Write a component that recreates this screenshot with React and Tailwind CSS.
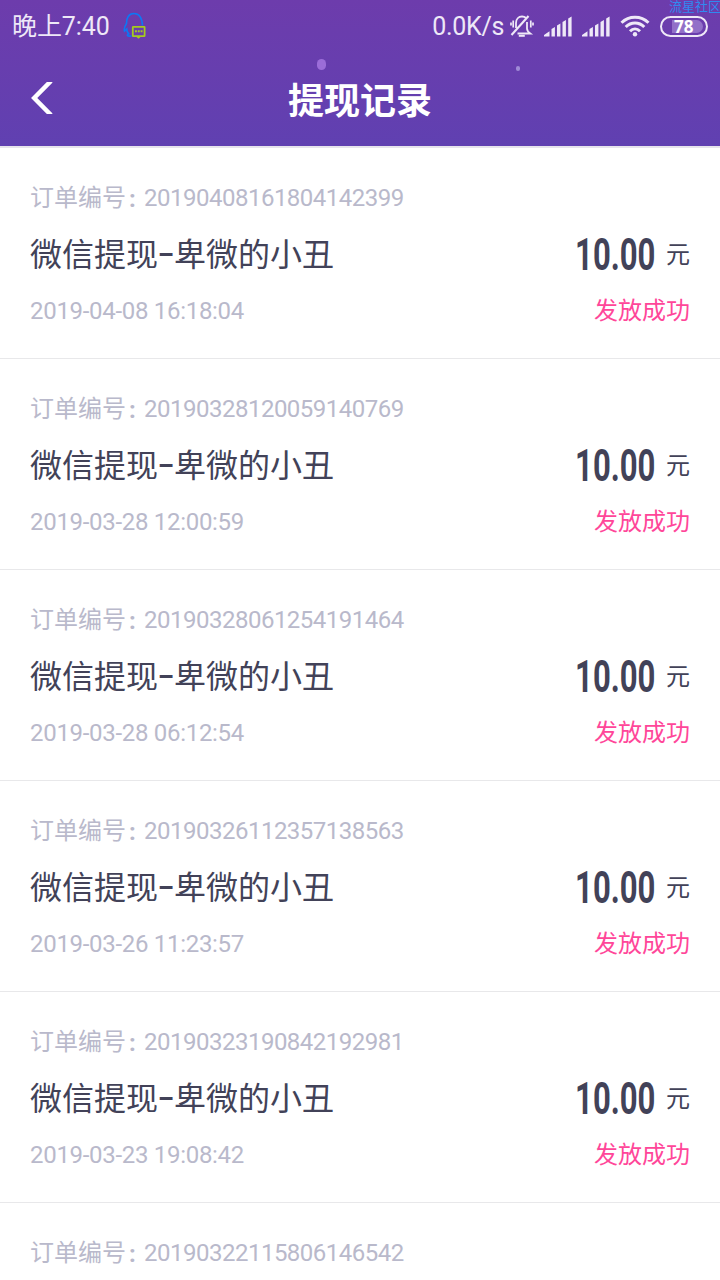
import React from "react";

const records = [
  { id: "20190408161804142399", time: "2019-04-08 16:18:04" },
  { id: "20190328120059140769", time: "2019-03-28 12:00:59" },
  { id: "20190328061254191464", time: "2019-03-28 06:12:54" },
  { id: "20190326112357138563", time: "2019-03-26 11:23:57" },
  { id: "20190323190842192981", time: "2019-03-23 19:08:42" },
];

const nextRecordId = "20190322115806146542";

function QQIcon() {
  return (
    <svg className="ml-[13px] w-6 h-7" viewBox="0 0 24 28" fill="none">
      <path
        d="M19.5 13.5C19 6 16.5 1.5 11 1.5S3.5 6 3.5 11.5C1.5 14.5 0.8 17 1.5 19l2.2-2c0 2 0.8 3.5 2 4.8-2 1-2.2 2.7 2.8 2.2"
        stroke="#0c78f5"
        strokeWidth="1.6"
      />
      <rect x="9.8" y="14.8" width="11.8" height="9.4" rx="0.5" stroke="#a5cc1e" strokeWidth="1.8" />
      <path d="M13.5 25h4l-2 1.7z" fill="#a5cc1e" />
      <path d="M12 19.3h1.9M14.8 19.3h1.9M17.6 19.3h1.9" stroke="#a5cc1e" strokeWidth="1.9" />
    </svg>
  );
}

function MuteIcon() {
  return (
    <svg className="w-6 h-6 ml-1.5" viewBox="0 0 24 24" fill="none" stroke="#eee8f7" strokeWidth="1.8">
      <path d="M6 14V9C6 5 8.5 2.5 12 2.5c1.7 0 3 0.5 4 1.5M17 8v6.5c0 2.2 1.2 3.500 3.300 5H7.500" />
      <path d="M1.5 21L18.5 2" strokeWidth="2.1" />
      <path d="M8.8 21.8h6" strokeWidth="2" />
      <path d="M3.200 6.500v7M1 8.500v3M20.800 6.500v7M23 8.500v3" strokeWidth="1.7" />
    </svg>
  );
}

function Signal({ className }) {
  return (
    <svg className={className} viewBox="0 0 28 21" fill="#eee8f7">
      <path d="M0 20.5v-1.5l5.5-3.8v5.3zM7.5 13l3.4-2v9.5h-3.4zM13 9.5l3.4-2v13h-3.4zM18.5 6l3.4-2v16.5h-3.4zM24.2 2.5l3.4-2v20h-3.4z" />
    </svg>
  );
}

function WifiIcon() {
  return (
    <svg className="w-[30px] h-[22px] ml-2.5" viewBox="0 0 30 22" fill="none" stroke="#eee8f7" strokeWidth="3">
      <path d="M1.5 7.7C9 0.3 21 0.3 28.5 7.7M5.7 12c5.3-5.3 13.3-5.3 18.6 0M10 16.2c3-3 7-3 10 0" />
      <circle cx="15" cy="19.2" r="2.2" fill="#eee8f7" stroke="none" />
    </svg>
  );
}

function StatusBar() {
  return (
    <div className="flex items-center h-[52px] pl-3 pr-3 text-[#eee8f7]">
      <span className="text-[25px] leading-none whitespace-nowrap tracking-[-0.1px] pt-px">
        晚上7:40
      </span>
      <QQIcon />
      <span className="ml-auto text-[25px] leading-none tracking-[-0.3px]">0.0K/s</span>
      <MuteIcon />
      <Signal className="w-7 h-[21px] ml-2.5" />
      <Signal className="w-7 h-[21px] ml-2.5" />
      <WifiIcon />
      <div className="ml-2.5 w-12 h-[21px] rounded-full border-2 border-[#eee8f7] pl-2.5 pr-[3px] py-0.5">
        <div className="flex items-center h-full pl-0.5 rounded-l-xs rounded-r-full bg-[#9270c8] font-['Noto_Sans'] text-[17px] leading-none font-bold text-white">
          78
        </div>
      </div>
    </div>
  );
}

function Header() {
  return (
    <header className="relative h-[148px] border-b-2 border-[#e6e4ec] bg-linear-to-b from-[#6d3cac] to-[#6040b1] overflow-hidden">
      <StatusBar />
      <div className="grid grid-cols-[1fr_auto_1fr] items-center h-[92px] px-[31px]">
        <svg className="w-[22px] h-8" viewBox="0 0 22 32" fill="none">
          <path d="M20 -1L3.2 16 20 33" stroke="white" strokeWidth="4.5" />
        </svg>
        <h1 className="pt-[7px] text-4xl font-bold text-white">提现记录</h1>
      </div>
      <span className="absolute left-[317px] top-[59px] w-[9px] h-[11px] rounded-full bg-[#9b6dd8]" />
      <span className="absolute left-[516px] top-[66px] w-1 h-[5px] rounded-full bg-[#a08bd6]" />
      <span className="absolute left-[669px] top-0 text-[13px] leading-[13px] whitespace-nowrap text-[#2f8af0]">
        流星社区
      </span>
    </header>
  );
}

function OrderNumber({ id }) {
  return (
    <div className="flex items-center h-9 text-2xl text-[#b9b9cb]">
      <span>订单编号</span>
      <span className="w-[18px] pl-[3px] pt-0.5 font-bold">:</span>
      <span className="tracking-[-0.5px]">{id}</span>
    </div>
  );
}

function Record({ id, time }) {
  return (
    <li className="h-[211px] px-[30px] pt-8 border-b border-[#e8e8ea]">
      <OrderNumber id={id} />
      <div className="flex items-center justify-between h-[76px] text-[#424258]">
        <div className="flex items-center pt-0.5 text-[32px]">
          <span>微信提现</span>
          <span className="w-4 flex justify-center font-medium scale-x-[0.8]">–</span>
          <span>卑微的小丑</span>
        </div>
        <div className="flex items-center">
          <span className="text-[45px] leading-none font-bold origin-right scale-x-[0.69]">
            10.00
          </span>
          <span className="ml-[11px] pt-0.5 text-2xl">元</span>
        </div>
      </div>
      <div className="flex items-center justify-between h-9 pt-0.5 text-2xl">
        <span className="text-[#b9b9cb] tracking-[-0.3px]">{time}</span>
        <span className="text-[#ff4699]">发放成功</span>
      </div>
    </li>
  );
}

export default function App() {
  return (
    <div className="w-[720px] h-[1280px] overflow-hidden bg-white font-[Roboto,'Noto_Sans_CJK_SC',sans-serif]">
      <Header />
      <ul>
        {records.map((record) => (
          <Record key={record.id} {...record} />
        ))}
        <li className="px-[30px] pt-8">
          <OrderNumber id={nextRecordId} />
        </li>
      </ul>
    </div>
  );
}
